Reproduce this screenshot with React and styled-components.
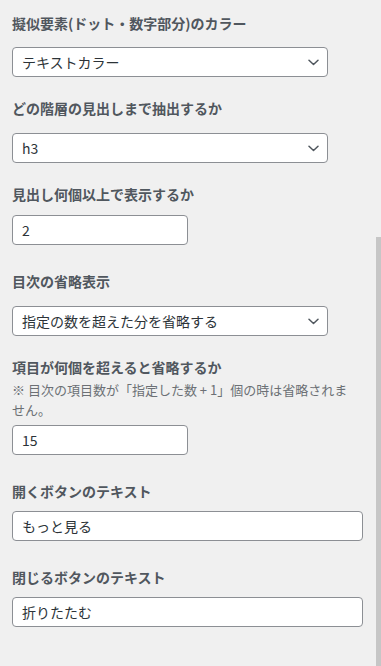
import React from 'react';
import styled, { createGlobalStyle } from 'styled-components';

const GlobalStyle = createGlobalStyle`
  * {
    box-sizing: border-box;
  }

  body {
    margin: 0;
    background-color: #f0f0f0;
    font-family: "Noto Sans CJK JP", "Noto Sans", sans-serif;
  }
`;

const Page = styled.div`
  display: flex;
  height: 666px;
  overflow: hidden;
  background-color: #f0f0f0;
`;

const Panel = styled.div`
  flex: 1;
  display: flex;
  flex-direction: column;
  align-items: flex-start;
  padding: 13px 13px 0 12px;
`;

const ScrollTrack = styled.div`
  width: 6px;
  display: flex;
  flex-direction: column;
`;

const ScrollThumb = styled.div`
  flex: 1;
  margin-top: 237px;
  background-color: #c6c6c6;
`;

const Label = styled.p`
  margin: 0 0 ${(p) => p.$gap}px;
  font-size: 14px;
  line-height: 20px;
  font-weight: 700;
  color: #50575e;
`;

const Note = styled.p`
  margin: 0 0 5px;
  max-width: 342px;
  font-size: 13px;
  line-height: 20px;
  color: #6c7075;
`;

const SelectBox = styled.div`
  margin: 5px 0 21px;
  width: 316px;
  height: 30px;
  padding: 0 8px 0 9px;
  display: flex;
  align-items: center;
  justify-content: space-between;
  background-color: #fff;
  border: 1px solid #8c8f94;
  border-radius: 4px;
  font-size: 14px;
  color: #2c3338;
`;

const Input = styled.div`
  margin-bottom: 26px;
  width: ${(p) => (p.$wide ? '351px' : '176px')};
  height: 30px;
  padding: 0 9px;
  display: flex;
  align-items: center;
  background-color: #fff;
  border: 1px solid #8c8f94;
  border-radius: 4px;
  font-size: 14px;
  color: #2c3338;
`;

function Chevron() {
  return (
    <svg width="11" height="7" viewBox="0 0 11 7" fill="none">
      <polyline
        points="1,1.2 5.5,5.5 10,1.2"
        stroke="#50575e"
        strokeWidth="1.5"
        strokeLinecap="round"
        strokeLinejoin="round"
      />
    </svg>
  );
}

function Select({ value }) {
  return (
    <SelectBox>
      <span>{value}</span>
      <Chevron />
    </SelectBox>
  );
}

function App() {
  return (
    <Page>
      <GlobalStyle />
      <Panel>
        <Label $gap={9}>擬似要素(ドット・数字部分)のカラー</Label>
        <Select value="テキストカラー" />

        <Label $gap={10}>どの階層の見出しまで抽出するか</Label>
        <Select value="h3" />

        <Label $gap={11}>見出し何個以上で表示するか</Label>
        <Input>2</Input>

        <Label $gap={10}>目次の省略表示</Label>
        <Select value="指定の数を超えた分を省略する" />

        <Label $gap={3}>項目が何個を超えると省略するか</Label>
        <Note>※ 目次の項目数が「指定した数 + 1」個の時は省略されません。</Note>
        <Input>15</Input>

        <Label $gap={10}>開くボタンのテキスト</Label>
        <Input $wide>もっと見る</Input>

        <Label $gap={10}>閉じるボタンのテキスト</Label>
        <Input $wide>折りたたむ</Input>
      </Panel>
      <ScrollTrack>
        <ScrollThumb />
      </ScrollTrack>
    </Page>
  );
}

export default App;
